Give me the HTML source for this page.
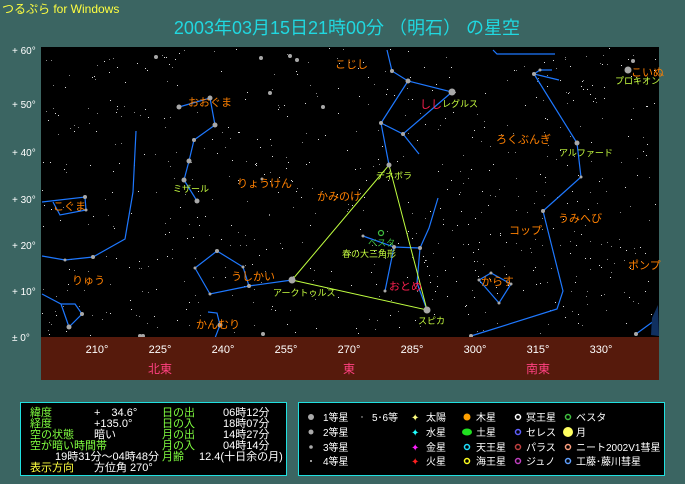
<!DOCTYPE html>
<html><head><meta charset="utf-8"><style>
html,body{margin:0;padding:0;background:#3b6562;width:685px;height:484px;overflow:hidden}
svg text{font-family:"Liberation Sans","Noto Sans CJK JP",sans-serif}
</style></head><body>
<svg id="s" width="685" height="484" viewBox="0 0 685 484" xmlns="http://www.w3.org/2000/svg">
<rect width="685" height="484" fill="#3b6562"/>
<text x="2" y="13" font-size="12" fill="#ffff40">つるぷら for Windows</text>
<text x="347" y="34" font-size="18" fill="#20d8e0" text-anchor="middle">2003年03月15日21時00分 （明石） の星空</text>
<rect x="41" y="47" width="618" height="290" fill="#000"/>
<g id="stars"></g>
<g stroke="#1e78ff" stroke-width="1.2" fill="none">
<polyline points="179,107 210,98 215,125 194,140 189,161 184,180 197,201"/>
<polyline points="136,131 133,192 125,239 93,257 65,260 42,256"/>
<polyline points="42,202 85,197 86,210 60,215 53,202"/>
<polyline points="42,294 61,304 75,304 82,314 69,327 61,304"/>
<polyline points="195,268 217,251 243,267 249,286 210,294 195,268"/>
<polyline points="249,286 292,280"/>
<polyline points="208,312 217,313 220,325 215,338"/>
<polyline points="387,50 392,71 408,81 452,92 403,134 381,123 408,81"/>
<polyline points="381,123 389,165"/><polyline points="403,134 419,154"/>
<polyline points="438,198 429,228 420,248 417,283 427,310"/>
<polyline points="420,248 394,247 363,236"/><polyline points="394,247 385,291"/>
<polyline points="552,70 540,70 534,74 559,80"/>
<polyline points="534,74 577,143 581,177 543,211 563,291 557,309 471,336"/>
<polyline points="493,50 497,54 555,54"/>
<polyline points="479,280 491,273 511,284 499,303 479,280"/>
<polyline points="636,334 658,318"/>
</g>
<path d="M658,305 L652,318 L651,335 L659,336 Z" fill="#103060"/>
<g stroke="#c0ff40" stroke-width="1" fill="none">
<polyline points="292,280 389,165 427,310 292,280"/>
</g>
<circle cx="381" cy="233" r="2.5" fill="none" stroke="#40c040" stroke-width="1.2"/>
<g fill="#a8a8a8" id="big"></g>
<g font-size="11" fill="#ff8000">
<text x="335" y="68">こじし</text><text x="188" y="106">おおぐま</text><text x="237" y="187">りょうけん</text>
<text x="317" y="200">かみのけ</text><text x="53" y="210">こぐま</text><text x="72" y="284">りゅう</text>
<text x="231" y="280">うしかい</text><text x="196" y="328">かんむり</text>
<text x="496" y="143">ろくぶんぎ</text><text x="509" y="234">コップ</text><text x="558" y="222">うみへび</text>
<text x="481" y="285">からす</text><text x="628" y="269">ポンプ</text><text x="631" y="76">こいぬ</text>
</g>
<g font-size="11" fill="#ff2050"><text x="420" y="108">しし</text><text x="389" y="290">おとめ</text></g>
<g font-size="9" fill="#c8ff40">
<text x="173" y="192">ミザール</text><text x="273" y="296">アークトゥルス</text><text x="442" y="107">レグルス</text>
<text x="376" y="179">デネボラ</text><text x="418" y="324">スピカ</text><text x="559" y="156">アルファード</text>
<text x="615" y="84">プロキオン</text><text x="342" y="257">春の大三角形</text>
</g>
<text x="368" y="246" font-size="9" fill="#40c040">ベスタ</text>
<g font-size="10" fill="#fff">
<text x="12" y="54">+ 60°</text><text x="12" y="108">+ 50°</text><text x="12" y="156">+ 40°</text>
<text x="12" y="203">+ 30°</text><text x="12" y="249">+ 20°</text><text x="12" y="295">+ 10°</text><text x="12" y="341">± 0°</text>
</g>
<rect x="41" y="337" width="618" height="43" fill="#561a0c"/>
<g font-size="11" fill="#fff" text-anchor="middle">
<text x="97" y="353">210°</text><text x="160" y="353">225°</text><text x="223" y="353">240°</text>
<text x="286" y="353">255°</text><text x="349" y="353">270°</text><text x="412" y="353">285°</text>
<text x="475" y="353">300°</text><text x="538" y="353">315°</text><text x="601" y="353">330°</text>
</g>
<g font-size="12" fill="#ff4080" text-anchor="middle">
<text x="160" y="373">北東</text><text x="349" y="373">東</text><text x="538" y="373">南東</text>
</g>
<rect x="20.5" y="402.5" width="266" height="73" fill="#000" stroke="#20e0e0"/>
<g font-size="11">
<g fill="#80ff40"><text x="30" y="416">緯度</text><text x="30" y="427">経度</text><text x="30" y="438">空の状態</text><text x="30" y="449">空が暗い時間帯</text>
<text x="162" y="416">日の出</text><text x="162" y="427">日の入</text><text x="162" y="438">月の出</text><text x="162" y="449">月の入</text><text x="162" y="460">月齢</text></g>
<g fill="#fff"><text x="94" y="416">+　34.6°</text><text x="94" y="427">+135.0°</text><text x="94" y="438">暗い</text>
<text x="55" y="460">19時31分～04時48分</text><text x="94" y="471">方位角 270°</text>
<text x="223" y="416">06時12分</text><text x="223" y="427">18時07分</text><text x="223" y="438">14時27分</text><text x="223" y="449">04時14分</text><text x="199" y="460">12.4(十日余の月)</text></g>
<text x="30" y="471" fill="#ffff40">表示方向</text>
</g>
<rect x="298.5" y="402.5" width="366" height="73" fill="#000" stroke="#20e0e0"/>
<g font-size="10" fill="#fff">
<circle cx="311" cy="417" r="3" fill="#aaa"/><text x="323" y="421">1等星</text>
<circle cx="311" cy="432" r="2.5" fill="#aaa"/><text x="323" y="436">2等星</text>
<circle cx="311" cy="447" r="1.8" fill="#aaa"/><text x="323" y="451">3等星</text>
<circle cx="311" cy="461" r="1" fill="#ccc"/><text x="323" y="465">4等星</text>
<circle cx="362" cy="417" r=".7" fill="#ccc"/><text x="372" y="421">5･6等</text>
<text x="411" y="421" fill="#ffff80">✦</text><text x="426" y="421">太陽</text>
<text x="411" y="436" fill="#20ffff">✦</text><text x="426" y="436">水星</text>
<text x="411" y="451" fill="#ff20ff">✦</text><text x="426" y="451">金星</text>
<text x="411" y="465" fill="#ff2020">✦</text><text x="426" y="465">火星</text>
<circle cx="467" cy="417" r="3.5" fill="#ffa000"/><text x="476" y="421">木星</text>
<ellipse cx="467" cy="432" rx="5" ry="3.5" fill="#20e020"/><text x="476" y="436">土星</text>
<circle cx="467" cy="447" r="2.5" fill="none" stroke="#20e0ff" stroke-width="1.5"/><text x="476" y="451">天王星</text>
<circle cx="467" cy="461" r="2.5" fill="none" stroke="#ffff20" stroke-width="1.5"/><text x="476" y="465">海王星</text>
<circle cx="518" cy="417" r="2.5" fill="none" stroke="#fff" stroke-width="1.5"/><text x="526" y="421">冥王星</text>
<circle cx="518" cy="432" r="2.5" fill="none" stroke="#6060ff" stroke-width="1.5"/><text x="526" y="436">セレス</text>
<circle cx="518" cy="447" r="2.5" fill="none" stroke="#c04040" stroke-width="1.5"/><text x="526" y="451">パラス</text>
<circle cx="518" cy="461" r="2.5" fill="none" stroke="#c040c0" stroke-width="1.5"/><text x="526" y="465">ジュノ</text>
<circle cx="568" cy="417" r="2.5" fill="none" stroke="#40c040" stroke-width="1.5"/><text x="576" y="421">ベスタ</text>
<circle cx="568" cy="432" r="5" fill="#ffff60"/><text x="576" y="436">月</text>
<circle cx="568" cy="447" r="2.5" fill="none" stroke="#ffa080" stroke-width="1.5"/><text x="576" y="451">ニート2002V1彗星</text>
<circle cx="568" cy="461" r="2.5" fill="none" stroke="#60a0ff" stroke-width="1.5"/><text x="576" y="465">工藤･藤川彗星</text>
</g>
</svg>
<script>
var g=document.getElementById('stars'),seed=7;
function r(){seed=(seed*16807)%2147483647;return seed/2147483647;}
var h='';
for(var i=0;i<650;i++){var x=42+r()*616,y=48+r()*288;h+='<rect x="'+x.toFixed(0)+'" y="'+y.toFixed(0)+'" width="1" height="1" fill="'+(r()<0.5?'#ddd':'#888')+'"/>';}
g.innerHTML=h;
var big=[[179,107,2.5],[210,98,2.5],[215,125,2.5],[194,140,2],[189,161,2.5],[184,180,2.5],[197,201,2.5],[85,197,2],[86,210,1.5],[93,257,2],[65,260,1.5],[82,314,2],[69,327,2.5],[217,251,2],[195,268,1.5],[243,267,1.5],[249,286,2],[210,294,1.5],[292,280,3.5],[220,325,2.5],[392,71,2],[408,81,2.5],[452,92,3.5],[403,134,2],[381,123,2],[389,165,2.5],[427,310,3.5],[420,248,2],[394,247,2],[363,236,1.5],[385,291,1.5],[534,74,2],[540,70,1.5],[577,143,2.5],[581,177,1.5],[543,211,2],[491,273,1.5],[511,284,1.5],[499,303,1.5],[479,280,1.5],[628,70,3.5],[633,61,2],[636,334,2],[140,336,2],[143,336,2],[471,336,2],[263,334,2],[156,57,2],[261,58,2],[290,56,2],[297,60,2],[270,93,2],[323,107,2],[262,179,1.5]];
var bh='';big.forEach(function(b){bh+='<circle cx="'+b[0]+'" cy="'+b[1]+'" r="'+b[2]+'" fill="#a8a8a8"/>';});
document.getElementById('big').innerHTML=bh;
</script>
</body></html>
